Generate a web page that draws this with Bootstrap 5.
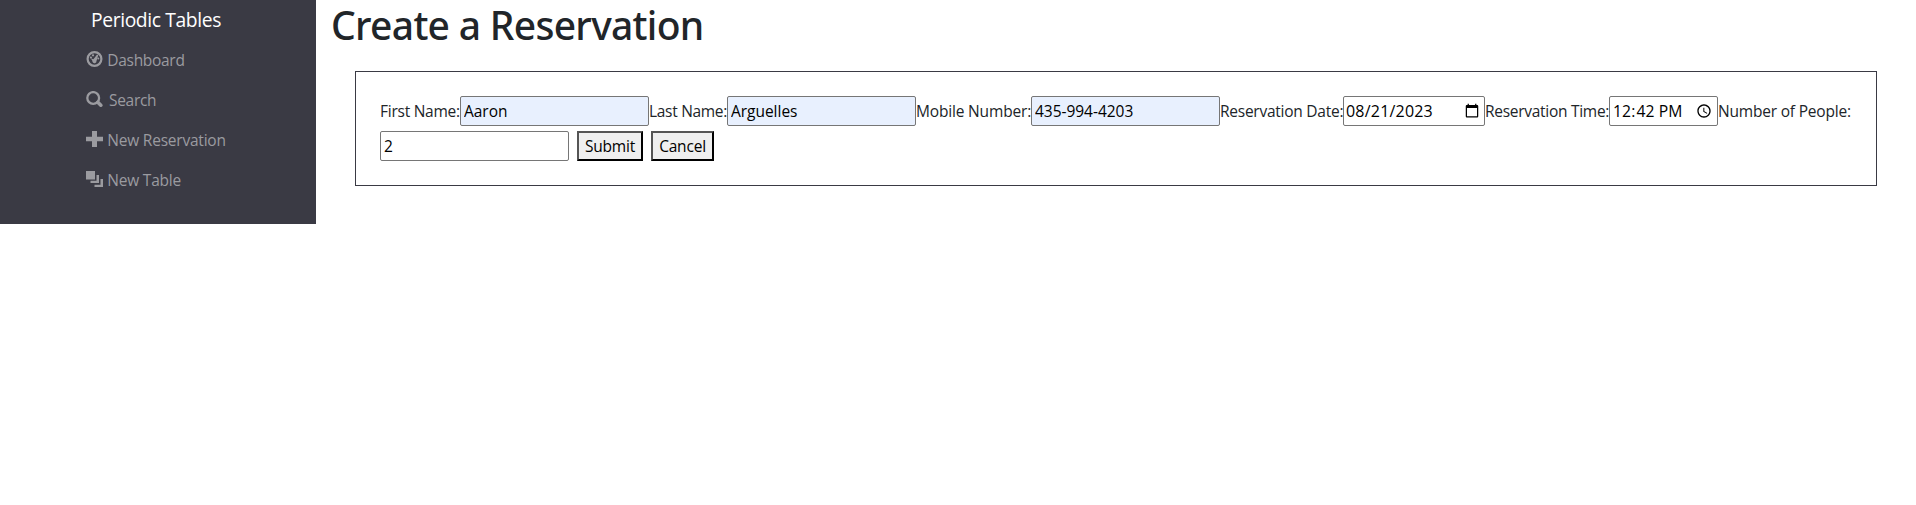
<!DOCTYPE html>
<html lang="en">
<head>
<meta charset="utf-8">
<title>Periodic Tables</title>
<link rel="stylesheet" href="https://cdn.jsdelivr.net/npm/bootstrap@5.3.0/dist/css/bootstrap.min.css">
<style>
body { font-family: "Open Sans", "Noto Sans", sans-serif; font-size: 15.5px; letter-spacing: -.25px; line-height: 24px; }
.side-menu { width: 316px; height: 224px; background: #3a3a44; }
.brand-text { font-size: 19.3px; letter-spacing: -.38px; line-height: 30px; padding: 5px 0 0 91px; color: #fff; }
.menu-links { padding: 5px 0 0 86px; }
.menu-links a { height: 40px; color: #9b9ba0; letter-spacing: -.3px; }
.menu-links a.wide-text { letter-spacing: -.22px; }
.menu-links svg { width: 17px; height: 16px; margin: -3px 4.3px 0 0; }
.page-title { font: 500 39px/48px "Noto Sans", sans-serif; letter-spacing: -.7px; padding-top: 1px; margin: 0 0 22px -24px; }
.page-body { padding-left: 39px; padding-right: 39px; }
.booking { border: 1px solid #3a3a44; padding: 24px; height: 115px; row-gap: 5px; }
.booking span { height: 30px; line-height: 30px; white-space: nowrap; }
.w-first { width: 80px; } .w-last { width: 78px; letter-spacing: -.3px; }
.w-phone { width: 115px; letter-spacing: -.17px; } .w-date { width: 123px; }
.w-time { width: 124px; letter-spacing: -.28px; } .w-people { width: 133px; letter-spacing: -.2px; }
.booking input { width: 189px; height: 30px; border: 1px solid #767676; border-radius: 2px; padding: 1px 2px 1px 3px; color: #000; background: #fff; letter-spacing: -.03px; }
.booking input.filled { background: #e8f0fe; }
.booking input[type=date] { width: 142px; padding-left: 2px; font-size: 16px; letter-spacing: .2px; }
.booking input[type=time] { width: 109px; font-size: 15.7px; letter-spacing: .1px; }
.booking button { height: 30px; border: 2px solid; border-color: #555 #000 #000 #555; background: #efefef; color: #000; padding: 0; letter-spacing: -.2px; line-height: 24px; }
.send { width: 66px; margin-left: 8px; } .dismiss { width: 63px; margin-left: 8px; }
</style>
<script src="https://cdn.jsdelivr.net/npm/bootstrap@5.3.0/dist/js/bootstrap.bundle.min.js"></script>
</head>
<body>
<div class="d-flex align-items-start">
  <nav class="side-menu flex-shrink-0">
    <div class="brand-text">Periodic Tables</div>
    <div class="menu-links d-flex flex-column">
      <a class="d-flex align-items-center text-decoration-none" href="#"><svg viewBox="0 0 17 16"><circle cx="8.5" cy="8" r="6.9" fill="none" stroke="currentColor" stroke-width="2.2"/><g fill="currentColor"><circle cx="4.900" cy="6.500" r="1.100"/><circle cx="7" cy="4.300" r="1.100"/><circle cx="12.300" cy="7.500" r="1"/><path d="M12.300 4 10.500 10A2.100 2.100 0 1 1 7.400 8.300L10.900 3.700Z"/><path d="M4.500 7.200 8 8.500 7.200 10.500Z"/></g></svg>Dashboard</a>
      <a class="d-flex align-items-center text-decoration-none" href="#"><svg viewBox="0 0 17 16" style="margin-right:6px"><circle cx="7.2" cy="7" r="5.900" fill="none" stroke="currentColor" stroke-width="2.3"/><path d="m11.800 11.300 3 2.900" stroke="currentColor" stroke-width="3.6" stroke-linecap="round"/></svg>Search</a>
      <a class="wide-text d-flex align-items-center text-decoration-none" href="#"><svg viewBox="0 0 17 16"><path d="M6 0h5v5.700h6v4.600h-6V16H6v-5.700H0V5.700h6z" fill="currentColor"/></svg>New Reservation</a>
      <a class="wide-text d-flex align-items-center text-decoration-none" href="#"><svg viewBox="0 0 17 16"><path d="M0 0h9v8.500H0zM10.500 4H13v8H4.500V9.700h6zM14.500 8H17v8H8.500v-2.300h6z" fill="currentColor"/></svg>New Table</a>
    </div>
  </nav>
  <main class="page-body flex-grow-1">
    <h1 class="page-title">Create a Reservation</h1>
    <form class="booking d-flex flex-wrap align-content-start">
      <span class="w-first">First Name:</span><input class="filled" type="text" value="Aaron">
      <span class="w-last">Last Name:</span><input class="filled" type="text" value="Arguelles">
      <span class="w-phone">Mobile Number:</span><input class="filled" type="text" value="435-994-4203">
      <span class="w-date">Reservation Date:</span><input type="date" value="2023-08-21">
      <span class="w-time">Reservation Time:</span><input type="time" value="12:42">
      <span class="w-people">Number of People:</span><input type="text" value="2">
      <button class="send" type="button">Submit</button>
      <button class="dismiss" type="button">Cancel</button>
    </form>
  </main>
</div>
</body>
</html>
